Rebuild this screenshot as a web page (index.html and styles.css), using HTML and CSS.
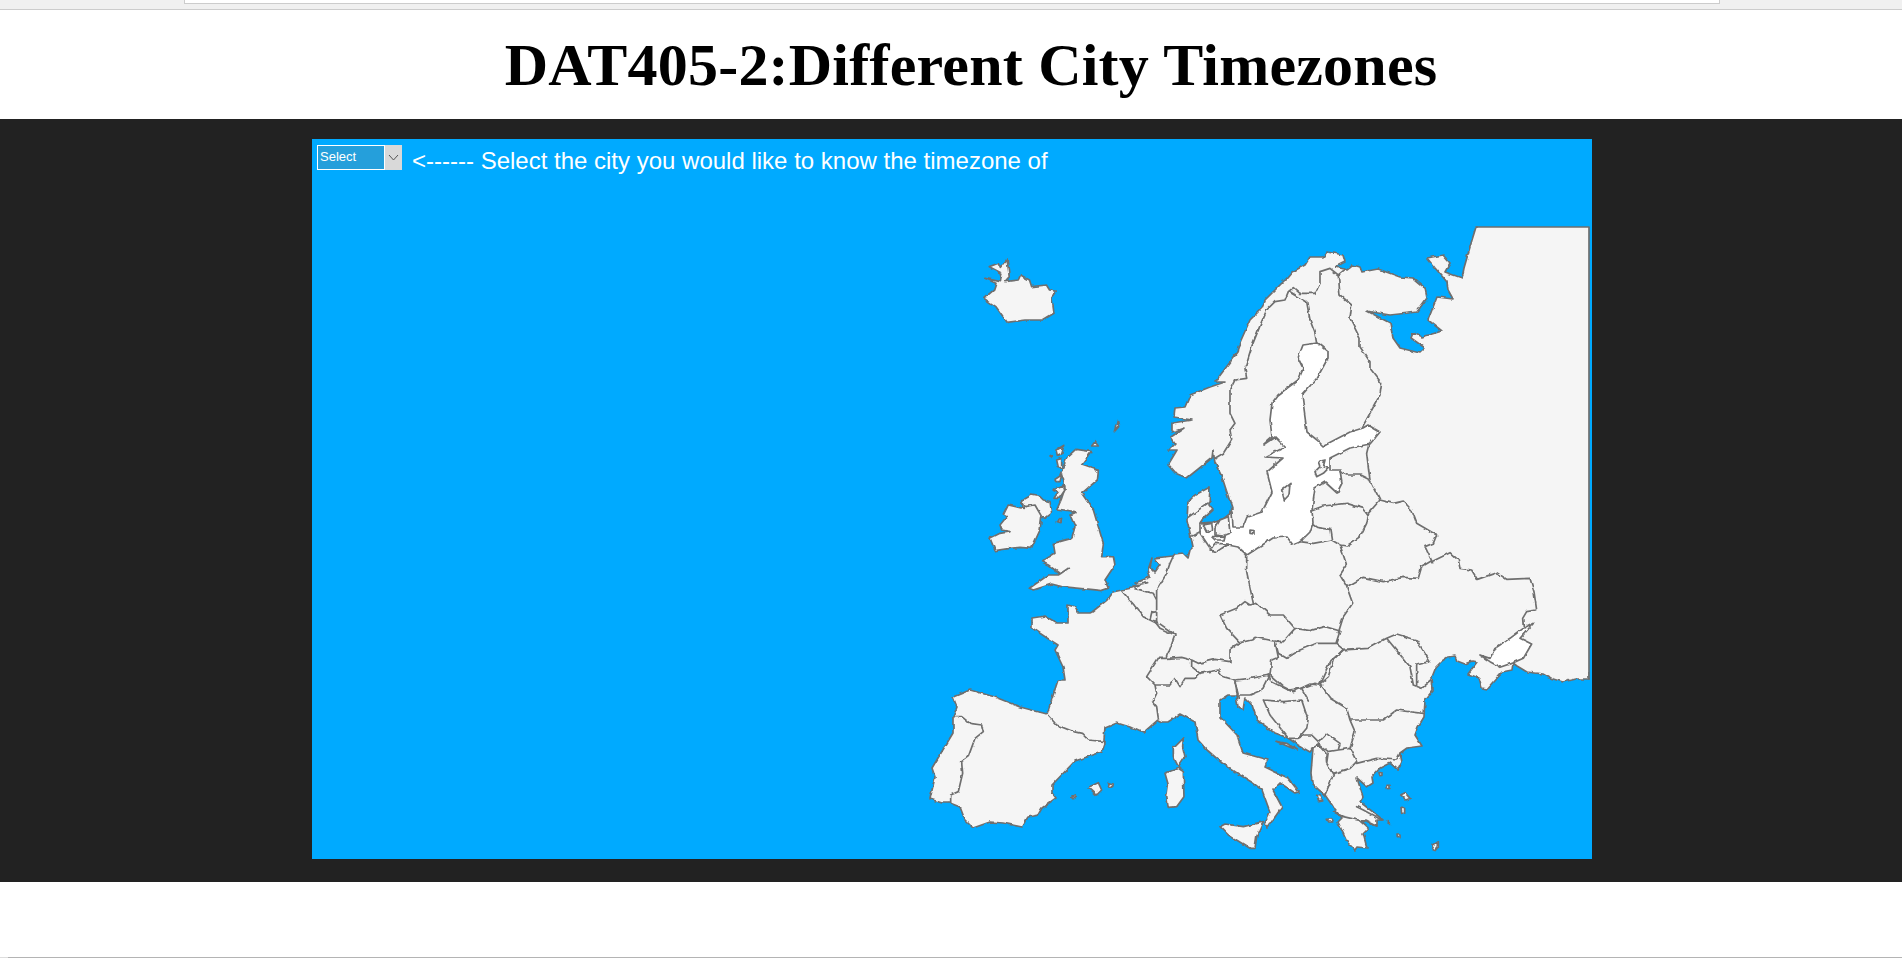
FILE: index.html
```html
<!DOCTYPE html>
<html lang="en">
<head>
<meta charset="utf-8">
<title>DAT405-2: Different City Timezones</title>
<link rel="stylesheet" href="styles.css">
</head>
<body>
<div class="toolbar"><div class="address"></div></div>
<header class="heading"><h1>DAT405-2:Different City Timezones</h1></header>
<main class="stage">
  <section class="panel">
    <svg class="map" viewBox="312 139 1280 720" width="1280" height="720" aria-label="Map of Europe">
      <defs>
        <filter id="rough" filterUnits="userSpaceOnUse" x="312" y="139" width="1280" height="720" color-interpolation-filters="sRGB">
          <feTurbulence type="fractalNoise" baseFrequency=".14" numOctaves="2" seed="4" result="n"/>
          <feDisplacementMap in="SourceGraphic" in2="n" scale="3.5" xChannelSelector="R" yChannelSelector="G"/>
          <feGaussianBlur stdDeviation=".3"/>
        </filter>
      </defs>
      <g filter="url(#rough)">
      <path class="land" d="M1476 227 1589 227 1589 679 1575 679 1563 682 1550 678 1543 674 1527 672 1517 666 1513 663 1512 670 1502 672 1493 682 1487 689 1482 688 1479 678 1468 674 1477 662 1472 661 1465 664 1457 661 1455 656 1448 657 1442 661 1436 667 1432 677 1433 690 1425 700 1424 717 1418 727 1415 735 1422 746 1407 748 1400 753 1402 762 1398 770 1390 763 1380 768 1372 777 1373 783 1367 787 1357 778 1363 797 1360 802 1373 812 1383 820 1377 820 1377 826 1365 820 1360 821 1368 828 1363 833 1367 848 1357 847 1355 850 1347 842 1338 822 1342 818 1335 810 1332 805 1325 795 1319 790 1312 783 1311 773 1313 748 1310 752 1298 745 1288 738 1275 733 1257 720 1252 705 1245 698 1243 710 1238 708 1236 695 1228 695 1220 700 1220 717 1237 735 1243 753 1268 760 1265 767 1288 778 1299 792 1295 793 1280 783 1273 790 1282 807 1275 817 1268 827 1265 823 1270 812 1262 790 1253 783 1240 775 1222 763 1207 750 1198 740 1195 722 1180 714 1168 722 1162 722 1158 720 1143 733 1130 727 1117 723 1105 728 1104 740 1105 743 1102 752 1075 761 1052 785 1052 793 1056 798 1042 808 1038 815 1028 817 1022 827 1003 823 990 822 973 828 965 820 960 807 950 803 942 803 930 799 935 777 932 768 953 733 953 717 957 707 953 697 970 690 995 697 1020 707 1047 714 1058 680 1065 680 1063 667 1055 650 1058 645 1047 638 1032 628 1032 618 1045 616 1057 623 1068 623 1068 605 1075 607 1078 613 1090 613 1092 612 1107 600 1113 592 1122 590 1132 588 1140 585 1135 583 1150 577 1148 570 1152 558 1150 567 1155 572 1160 565 1155 558 1173 556 1175 554 1183 553 1188 558 1190 550 1193 547 1191 537 1187 520 1188 502 1195 495 1210 487 1209 505 1213 510 1202 520 1200 523 1213 522 1222 519 1225 520 1230 515 1232 508 1222 477 1215 463 1213 450 1212 458 1187 478 1175 473 1168 465 1177 450 1168 450 1175 443 1171 437 1184 428 1172 432 1172 423 1192 420 1174 417 1175 408 1185 407 1190 395 1210 387 1225 382 1215 382 1237 353 1238 347 1250 320 1262 308 1265 300 1277 288 1287 278 1292 272 1305 265 1310 257 1323 257 1327 252 1343 255 1345 262 1335 267 1347 270 1353 265 1360 267 1362 272 1378 269 1400 277 1413 278 1425 288 1427 298 1417 312 1390 315 1372 312 1367 311 1390 323 1393 338 1400 348 1420 353 1425 348 1418 343 1411 338 1413 333 1422 337 1442 331 1428 320 1437 297 1453 299 1448 290 1447 282 1435 268 1427 258 1443 255 1450 263 1445 272 1462 278 1464 268 1472 240Z"/>
      <path class="sea" d="M1303 345 1317 343 1328 352 1328 358 1317 378 1302 395 1307 432 1317 440 1323 446 1350 432 1363 428 1368 425 1380 432 1370 444 1350 448 1330 458 1330 470 1340 470 1342 483 1337 493 1325 482 1315 488 1312 510 1313 523 1310 532 1300 542 1293 545 1287 537 1273 538 1247 555 1238 547 1228 545 1213 552 1208 545 1200 533 1200 524 1213 523 1222 520 1232 512 1233 527 1243 527 1247 517 1262 512 1268 500 1272 492 1267 472 1283 458 1265 457 1285 447 1275 437 1263 445 1272 437 1270 420 1272 403 1278 395 1298 380 1303 368 1298 358Z"/>
      <g transform="translate(1160 240) scale(.3333)">
        <path class="line" d="M165 655 190 640 215 600 210 570 225 550 210 520 210 450 225 420 260 415 255 385 275 320 305 245 320 210 345 185 375 180 385 155 400 143 420 160 465 160 480 130 480 95 510 85 535 105 555 88M390 155 440 185 450 240 465 280 470 310M535 105 540 165 575 195 570 235 600 295 600 320 630 365 630 385 665 430 660 465 605 565"/>
        <path class="land" d="M475 665 495 660 490 680 505 685 490 700 470 710 465 695 480 680Z"/>
      </g>
      <g transform="translate(1150 440) scale(.3333)">
        <path class="line" d="M660 0 650 40 660 120M570 95 590 105 630 105 660 120 690 180 655 220M487 210 520 198 590 190 640 205 655 225 650 250 630 290 590 318 570 315 545 300M490 255 500 262 540 268 545 300M450 305 490 310 545 300M570 315 590 375 570 405 590 440M690 180 730 190 760 183 785 210 800 250 860 285 850 310 825 320 845 362M590 440 640 412 700 425 760 412 805 415 815 380 845 362M590 440 608 490 580 530 565 578M290 345 290 395 310 490"/>
        <path class="land" d="M395 150 420 130 417 165 403 180ZM300 270 312 272 312 282 300 280Z"/>
        <path class="land" d="M160 255 185 250 188 270 170 275ZM195 265 210 240 235 230 240 280 220 288 195 285ZM185 290 225 288 222 300 195 300ZM180 330 195 310 235 312 200 335Z"/>
      </g>
      <g transform="translate(1120 560) scale(.3333)">
        <path class="line" d="M300 165 350 145 375 125 390 135 410 130 450 165 490 165 525 205 570 212 615 200 660 213 648 250M300 165 320 205 360 248 395 240 405 232 460 243 490 245 525 205M465 243 475 280 500 295 540 270 590 250 648 250 670 268 640 300 625 350 595 375M670 268 720 265M450 345 490 380 520 395 570 372 595 375M360 248 330 270 330 305 285 298 235 310 215 300 185 292 140 295M465 243 475 292 455 300 450 345 390 355 345 360 310 350 295 330 240 340M105 185 120 205 165 225 140 295 115 295 80 350 105 375 150 375 165 355 180 380 195 355 225 355 240 340 215 320 215 300M105 375 110 400 98 425 110 440 115 475M345 360 350 395 355 415"/>
      </g>
      <g transform="translate(1200 620) scale(.3333)">
        <path class="line" d="M190 240 250 245 305 240 318 280 325 295 320 325 295 355 265 355 210 285 190 240M205 165 215 185 265 210 305 205 345 190 365 195M105 185 115 225 150 225 185 210 205 170M360 195 390 235 440 265 450 300 465 335 450 385M305 205 325 240M295 355 315 345 335 345 355 365 378 340 420 370 415 390 385 395 355 372M385 395 415 390 450 385 470 425 450 445 400 460 380 430 385 395M335 385 355 375 378 400 380 430 400 465 375 525M470 430 530 415 590 420 600 400M450 300 550 300 590 270 670 280M360 190 390 125 430 90 505 85 560 55 590 42 650 60 690 125 650 135 650 195M560 55 630 140 640 195 665 205 695 180M400 575 430 590 495 605 530 618M470 560 490 570 545 600"/>
        <path class="land" d="M60 620 75 612 130 620 190 605 170 650 165 685 150 685 85 645ZM697 690 700 675 715 665 715 680 705 692ZM537 458 546 458 546 466 540 467ZM561 496 570 496 570 505 562 506ZM602 525 615 518 630 535 618 540ZM603 565 614 565 614 580 605 580ZM562 602 568 610 568 616 562 612ZM591 642 600 642 600 653 592 653ZM382 598 392 596 398 606 386 606ZM350 526 362 528 368 540 356 542Z"/>
        <path class="land" d="M228 364 260 370 292 390 270 382Z"/>
      </g>
      <g transform="translate(1330 530) scale(.3333)">
        <path class="line" d="M305 95 360 68 385 90 390 115 425 120 442 148 500 128 530 148 600 145 612 185 620 240 590 245 578 265 580 290"/>
        <path class="sea" d="M610 280 570 325 605 342 580 385 550 398 510 412 480 395 450 375 480 385 495 355 540 325 580 295Z"/>
      </g>
      <g transform="translate(980 430) scale(.3333)">
        <path class="land" d="M290 58 335 65 305 105 355 122 352 150 305 190 340 240 370 340 365 380 400 380 405 405 375 450 385 475 365 482 300 475 245 470 215 462 160 480 148 475 205 435 235 435 265 415 240 432 205 405 185 395 225 370 220 340 275 325 285 290 270 255 285 248 230 240 245 205 255 175 250 145 240 135 260 85Z"/>
        <path class="land" d="M85 225 130 235 125 212 155 195 180 200 190 210 210 215 215 250 195 265 185 260 180 300 155 355 120 352 90 355 45 362 30 325 60 310 90 305 65 300 60 285 80 260 70 255Z"/>
        <path class="land" d="M228 60 252 46 245 70 232 76ZM230 90 245 85 245 115 235 112ZM335 48 345 35 355 48ZM222 150 245 135 240 155 225 155ZM220 178 250 165 255 180 238 205 222 205 235 185ZM232 275 245 265 243 278ZM210 78 216 74 217 82Z"/>
        <path class="line" d="M125 212 135 230 165 225 185 260M425 482 470 535 490 560 510 570 530 580M465 475 520 490 530 510 530 545 515 548 510 570M580 378 570 400 560 430 530 480 530 575 580 610M632 320 660 305M460 468 500 458M620 265 690 215"/>
      </g>
      <g transform="translate(920 600) scale(.3333)">
        <path class="line" d="M380 342 410 375 460 395 485 400 505 420 555 425M100 350 125 350 150 370 185 375 190 395 165 415 145 470 125 485 128 520 115 575 92 585 92 608"/>
        <path class="land" d="M790 415 788 440 795 470 775 500 760 470 760 445ZM775 505 790 515 792 590 770 620 745 622 740 590 745 555 735 520ZM505 562 535 548 545 570 530 585ZM565 548 580 552 578 560 568 558ZM455 592 466 585 466 592 458 596Z"/>
      </g>
      <g transform="translate(900 210) scale(.4464 .3333)">
        <path class="land" d="M240 150 245 200 235 215 265 210 270 195 290 210 295 230 328 225 335 240 350 243 340 260 345 310 320 330 280 330 240 337 215 290 188 265 210 240 215 220 190 205 225 215 228 190 200 170 220 160 225 175ZM487 632 480 665 490 650Z"/>
      </g>
      </g>
      <path class="water-edge" d="M1478 224H1592M1592 224V676"/>
      <path class="land-edge" d="M1478 227H1589V672H1582V234H1476Z"/>
      <path class="line" d="M1476 227H1589V679"/>
    </svg>
    <form class="controls">
      <div class="picker">
        <select class="city" aria-label="City"><option>Select</option></select>
        <span class="chevron"><svg width="11" height="7" viewBox="0 0 11 7"><path d="M1 1 5.5 6 10 1"/></svg></span>
      </div>
      <label class="hint">&lt;------ Select the city you would like to know the timezone of</label>
    </form>
  </section>
</main>
<footer class="below"><div class="scrollbar"></div></footer>
</body>
</html>
```
FILE: styles.css
```css
html, body { margin: 0; height: 100%; }
body {
  height: 958px;
  display: flex;
  flex-direction: column;
  overflow: hidden;
  background: #fff;
  font-family: "Liberation Sans", Arial, sans-serif;
}
.toolbar {
  height: 9px;
  flex: none;
  background: #f0f0f0;
  border-bottom: 1px solid #ccc;
  padding: 0 182px 0 184px;
}
.address {
  height: 3px;
  background: #fff;
  border: 1px solid #ccc;
  border-top: 0;
}
.heading {
  height: 109px;
  flex: none;
  display: flex;
  align-items: center;
  justify-content: center;
  padding-left: 40px;
}
.heading h1 {
  margin: 0;
  font: bold 60px/1 "Liberation Serif", "Times New Roman", serif;
  letter-spacing: .22px;
  color: #000;
}
.stage {
  flex: none;
  height: 763px;
  box-sizing: border-box;
  background: #222;
  padding: 20px 0 0 312px;
}
.panel {
  position: relative;
  width: 1280px;
  height: 720px;
  background: #0af;
}
.map { display: block; }
.map path { vector-effect: non-scaling-stroke; stroke-linejoin: round; stroke-linecap: round; }
.land { fill: #f5f5f5; stroke: #6f6f6f; stroke-width: 1.7; }
.sea { fill: #fff; stroke: #6f6f6f; stroke-width: 1.7; }
.line { fill: none; stroke: #6f6f6f; stroke-width: 1.7; }
.map .water-edge { fill: none; stroke: #0af; stroke-width: 6; stroke-linecap: butt; }
.land-edge { fill: #f5f5f5; }
.controls {
  position: absolute;
  top: 6px;
  left: 5px;
  display: flex;
  align-items: flex-start;
  gap: 10px;
}
.picker { display: flex; width: 85px; height: 25px; }
.city {
  appearance: none;
  width: 68px;
  height: 25px;
  margin: 0;
  padding: 0 0 2px 2px;
  box-sizing: border-box;
  border: 1px solid #fff;
  border-radius: 0;
  background: #259fdb;
  color: #fff;
  font: 13px "Liberation Sans", Arial, sans-serif;
}
.chevron {
  width: 17px;
  background: #d9d9d9;
  display: flex;
  align-items: center;
  justify-content: center;
}
.chevron path { fill: none; stroke: #555; stroke-width: 1; }
.hint {
  color: #fff;
  font-size: 24px;
  line-height: 28px;
  margin-top: 2px;
  white-space: nowrap;
}
.below { flex: 1; display: flex; align-items: flex-end; }
.scrollbar {
  flex: 1;
  height: 1px;
  background: #b4b4b4;
  border-left: 8px solid #ddd;
}
```
